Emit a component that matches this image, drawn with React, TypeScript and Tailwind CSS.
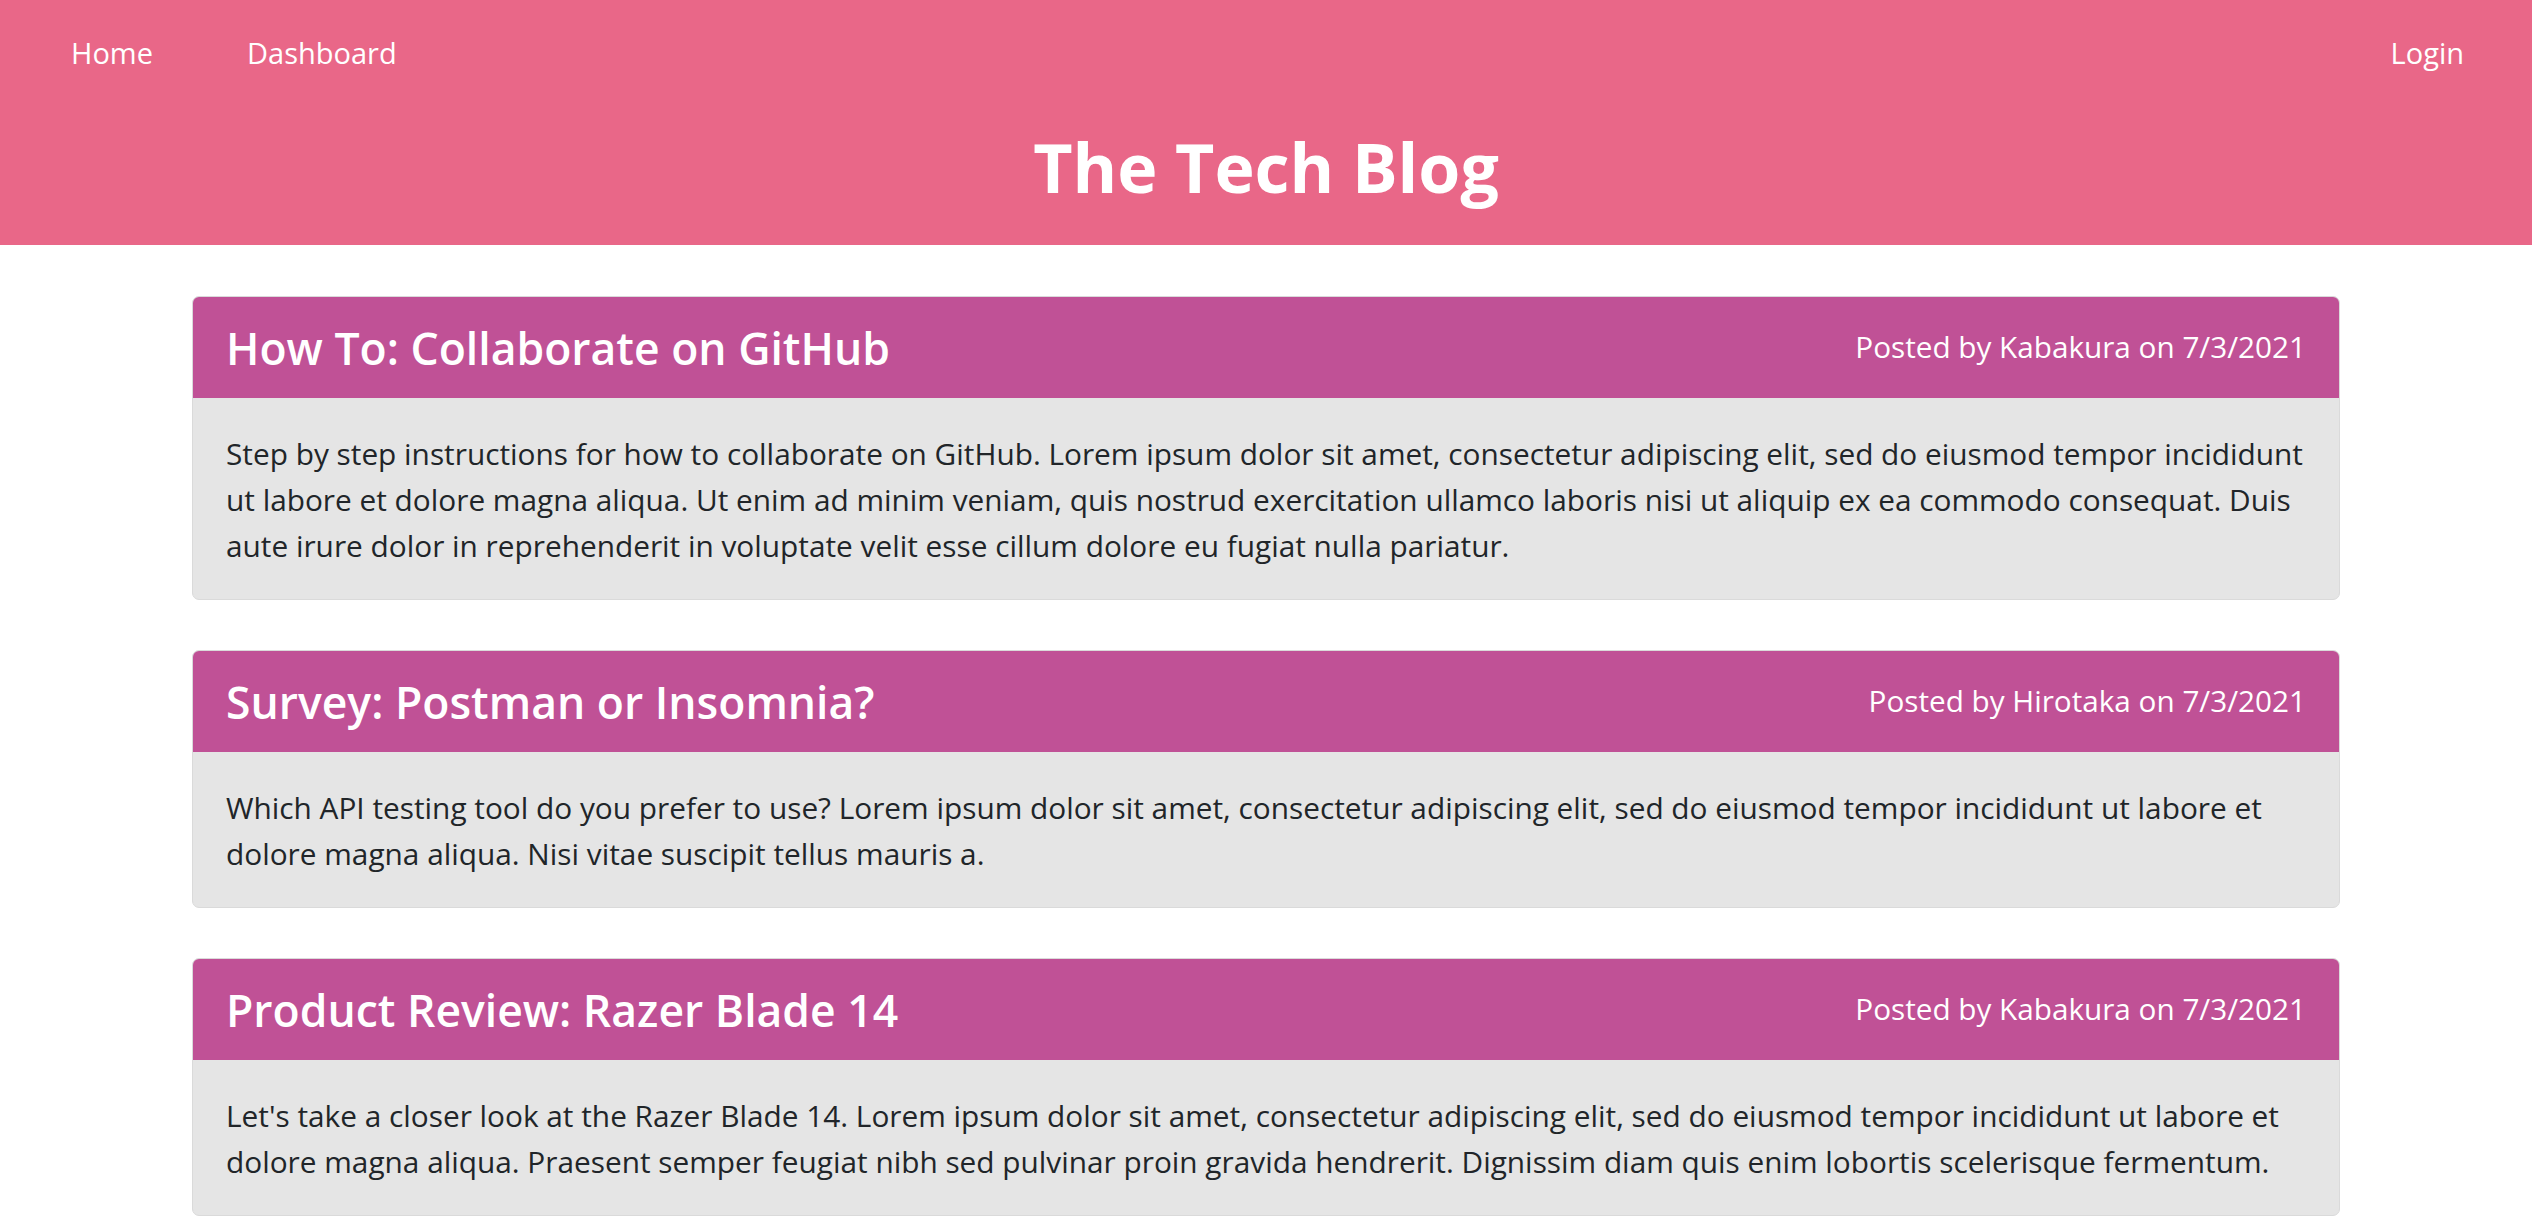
import React from 'react';

type Post = {
  title: string;
  author: string;
  date: string;
  body: string;
};

const posts: Post[] = [
  {
    title: 'How To: Collaborate on GitHub',
    author: 'Kabakura',
    date: '7/3/2021',
    body: 'Step by step instructions for how to collaborate on GitHub. Lorem ipsum dolor sit amet, consectetur adipiscing elit, sed do eiusmod tempor incididunt ut labore et dolore magna aliqua. Ut enim ad minim veniam, quis nostrud exercitation ullamco laboris nisi ut aliquip ex ea commodo consequat. Duis aute irure dolor in reprehenderit in voluptate velit esse cillum dolore eu fugiat nulla pariatur.',
  },
  {
    title: 'Survey: Postman or Insomnia?',
    author: 'Hirotaka',
    date: '7/3/2021',
    body: 'Which API testing tool do you prefer to use? Lorem ipsum dolor sit amet, consectetur adipiscing elit, sed do eiusmod tempor incididunt ut labore et dolore magna aliqua. Nisi vitae suscipit tellus mauris a.',
  },
  {
    title: 'Product Review: Razer Blade 14',
    author: 'Kabakura',
    date: '7/3/2021',
    body: "Let's take a closer look at the Razer Blade 14. Lorem ipsum dolor sit amet, consectetur adipiscing elit, sed do eiusmod tempor incididunt ut labore et dolore magna aliqua. Praesent semper feugiat nibh sed pulvinar proin gravida hendrerit. Dignissim diam quis enim lobortis scelerisque fermentum.",
  },
];

const PostCard: React.FC<{ post: Post }> = ({ post }) => (
  <article className="rounded-[7px] border border-[#dadada] overflow-hidden bg-[#e5e5e5]">
    <div className="flex h-[101px] items-center justify-between bg-[#c05196] px-[33px] text-white">
      <h2 className="text-[44.5px] font-semibold leading-tight">{post.title}</h2>
      <p className="text-[29.7px]">
        Posted by {post.author} on {post.date}
      </p>
    </div>
    <div className="px-[33px] pt-[33px] pb-[30px] text-[29.8px] leading-[46px] text-[#212529]">
      <p>{post.body}</p>
    </div>
  </article>
);

export default function App() {
  return (
    <div className="min-h-screen bg-white font-['Open_Sans',sans-serif]">
      <header className="flex h-[245px] flex-col bg-[#e96788] text-white">
        <nav className="flex h-[106px] items-center justify-between pl-[71px] pr-[68px] text-[29px]">
          <div className="flex gap-[94px]">
            <a href="#">Home</a>
            <a href="#">Dashboard</a>
          </div>
          <a href="#">Login</a>
        </nav>
        <h1 className="mt-[27px] text-center text-[68px] font-bold leading-none">The Tech Blog</h1>
      </header>

      <main className="mx-auto flex w-[2148px] flex-col gap-[50px] pt-[51px]">
        {posts.map((post) => (
          <PostCard key={post.title} post={post} />
        ))}
      </main>
    </div>
  );
}
